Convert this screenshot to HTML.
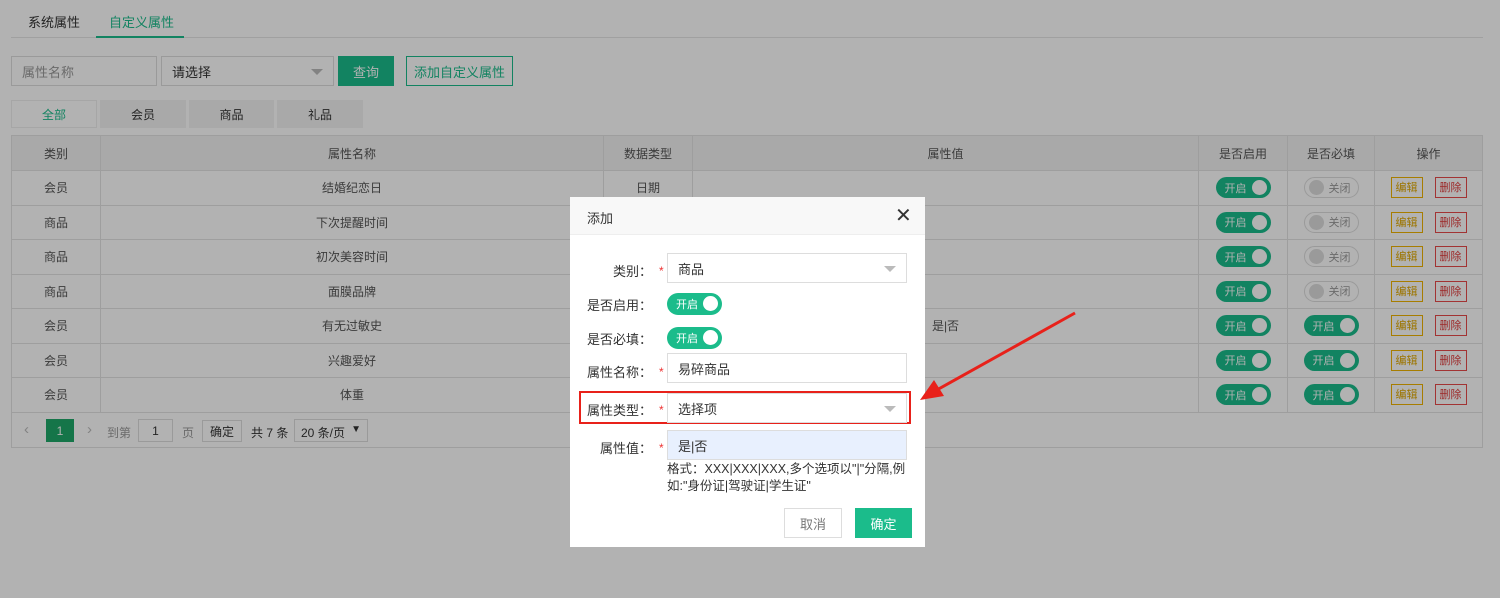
<!DOCTYPE html>
<html><head><meta charset="utf-8"><style>
*{box-sizing:border-box;margin:0;padding:0}
body{width:1500px;height:598px;position:relative;overflow:hidden;background:#fff;font-family:"Liberation Sans","Noto Sans CJK SC",sans-serif;font-size:12px;color:#333}
.a{position:absolute}
.c{display:flex;align-items:center;justify-content:center}
table{border-collapse:collapse;position:absolute;left:11px;top:135px;width:1472px}
td{border:1px solid #e3e3e3;text-align:center;height:34.5px;color:#555}
tr.h td{background:#f2f2f2;height:35px}
.tg{display:inline-flex;align-items:center;width:55px;height:21px;border-radius:11px;background:#1bbc8b;color:#fff;font-size:11px;padding-left:9px;position:relative;vertical-align:middle}
.tg:after{content:"";position:absolute;right:4px;top:3px;width:15px;height:15px;border-radius:50%;background:#fff}
.off{background:#fff;border:1px solid #ddd;color:#999;padding-left:24px}
.off:after{left:4px;right:auto;top:2px;background:#ddd}
.b{display:inline-block;border:1px solid;font-size:11px;width:32px;height:21px;line-height:21px;vertical-align:middle;margin:0 6px}
.e{border-color:#f0b400;color:#e0a800}.d{border-color:#e84a4a;color:#e03a3a}
.inp{border:1px solid #ddd;background:#fff;height:30px;padding-left:10px;display:flex;align-items:center;font-size:13px}
.tri{position:absolute;right:10px;top:12px;border:6px solid transparent;border-top:6px solid #bbb;border-bottom:0}
.lab{position:absolute;width:92px;text-align:right;left:560px;font-size:13px;color:#333}
.st{position:absolute;left:659px;color:#e33;font-size:12px}
</style></head><body>
<div class="a" style="left:28px;top:12px;font-size:13px">系统属性</div>
<div class="a" style="left:109px;top:12px;font-size:13px;color:#1bbc8b">自定义属性</div>
<div class="a" style="left:11px;top:37px;width:1472px;height:1px;background:#e5e5e5"></div>
<div class="a" style="left:96px;top:36px;width:88px;height:2px;background:#1bbc8b"></div>
<div class="a inp" style="left:11px;top:56px;width:146px;color:#999">属性名称</div>
<div class="a inp" style="left:161px;top:56px;width:173px">请选择<span class="tri"></span></div>
<div class="a c" style="left:338px;top:56px;width:56px;height:30px;background:#1bbc8b;color:#fff;font-size:13px">查询</div>
<div class="a c" style="left:406px;top:56px;width:107px;height:30px;border:1px solid #1bbc8b;color:#1bbc8b;font-size:13px">添加自定义属性</div>
<div class="a c" style="left:11px;top:100px;width:86px;height:28px;border:1px solid #eee;color:#1bbc8b;background:#fff">全部</div>
<div class="a c" style="left:100px;top:100px;width:86px;height:28px;background:#f3f3f3">会员</div>
<div class="a c" style="left:189px;top:100px;width:85px;height:28px;background:#f3f3f3">商品</div>
<div class="a c" style="left:277px;top:100px;width:86px;height:28px;background:#f3f3f3">礼品</div>
<table>
<colgroup><col style="width:89px"><col style="width:503px"><col style="width:89px"><col style="width:506px"><col style="width:89px"><col style="width:87px"><col></colgroup>
<tr class="h"><td>类别</td><td>属性名称</td><td>数据类型</td><td>属性值</td><td>是否启用</td><td>是否必填</td><td>操作</td></tr>
<tr><td>会员</td><td>结婚纪恋日</td><td>日期</td><td></td><td><span class="tg">开启</span></td><td><span class="tg off">关闭</span></td><td><span class="b e">编辑</span><span class="b d">删除</span></td></tr>
<tr><td>商品</td><td>下次提醒时间</td><td></td><td></td><td><span class="tg">开启</span></td><td><span class="tg off">关闭</span></td><td><span class="b e">编辑</span><span class="b d">删除</span></td></tr>
<tr><td>商品</td><td>初次美容时间</td><td></td><td></td><td><span class="tg">开启</span></td><td><span class="tg off">关闭</span></td><td><span class="b e">编辑</span><span class="b d">删除</span></td></tr>
<tr><td>商品</td><td>面膜品牌</td><td></td><td></td><td><span class="tg">开启</span></td><td><span class="tg off">关闭</span></td><td><span class="b e">编辑</span><span class="b d">删除</span></td></tr>
<tr><td>会员</td><td>有无过敏史</td><td></td><td>是|否</td><td><span class="tg">开启</span></td><td><span class="tg">开启</span></td><td><span class="b e">编辑</span><span class="b d">删除</span></td></tr>
<tr><td>会员</td><td>兴趣爱好</td><td></td><td></td><td><span class="tg">开启</span></td><td><span class="tg">开启</span></td><td><span class="b e">编辑</span><span class="b d">删除</span></td></tr>
<tr><td>会员</td><td>体重</td><td></td><td></td><td><span class="tg">开启</span></td><td><span class="tg">开启</span></td><td><span class="b e">编辑</span><span class="b d">删除</span></td></tr>
</table>
<div class="a" style="left:11px;top:412px;width:1472px;height:36px;border:1px solid #e3e3e3;border-top:0"></div>
<div class="a" style="left:24px;top:421px;color:#bbb;font-size:15px">‹</div>
<div class="a c" style="left:46px;top:419px;width:28px;height:23px;background:#1fa869;color:#fff">1</div>
<div class="a" style="left:87px;top:421px;color:#bbb;font-size:15px">›</div>
<div class="a" style="left:107px;top:424px;color:#999">到第</div>
<div class="a c" style="left:138px;top:419px;width:35px;height:23px;border:1px solid #ddd;background:#fff">1</div>
<div class="a" style="left:182px;top:424px;color:#999">页</div>
<div class="a c" style="left:202px;top:420px;width:40px;height:22px;border:1px solid #ddd;background:#fff">确定</div>
<div class="a" style="left:251px;top:424px">共 7 条</div>
<div class="a" style="left:294px;top:419px;width:74px;height:23px;border:1px solid #ddd;background:#fff;padding:4px 6px">20 条/页 <span style="float:right;font-size:10px">▼</span></div>
<div class="a" style="left:0;top:0;width:1500px;height:598px;background:rgba(0,0,0,0.3)"></div>
<div class="a" style="left:570px;top:197px;width:355px;height:350px;background:#fff"></div>
<div class="a" style="left:570px;top:197px;width:355px;height:38px;background:#f8f8f8;border-bottom:1px solid #eee"></div>
<div class="a" style="left:587px;top:208px;font-size:13px">添加</div>
<div class="a" style="left:895px;top:203px;font-size:20px;color:#333">✕</div>
<div class="lab" style="top:261px">类别：</div><div class="st" style="top:264px">*</div>
<div class="a inp" style="left:667px;top:253px;width:240px">商品<span class="tri"></span></div>
<div class="lab" style="top:295px">是否启用：</div>
<span class="tg" style="position:absolute;left:667px;top:293px;width:55px;height:22px">开启</span>
<div class="lab" style="top:329px">是否必填：</div>
<span class="tg" style="position:absolute;left:667px;top:327px;width:55px;height:22px">开启</span>
<div class="lab" style="top:362px">属性名称：</div><div class="st" style="top:365px">*</div>
<div class="a inp" style="left:667px;top:353px;width:240px">易碎商品</div>
<div class="a" style="left:579px;top:391px;width:332px;height:33px;border:2px solid #e8211a"></div>
<div class="lab" style="top:400px">属性类型：</div><div class="st" style="top:403px">*</div>
<div class="a inp" style="left:667px;top:393px;width:240px">选择项<span class="tri"></span></div>
<div class="lab" style="top:438px">属性值：</div><div class="st" style="top:441px">*</div>
<div class="a inp" style="left:667px;top:430px;width:240px;background:#e8f0fe">是|否</div>
<div class="a" style="left:667px;top:461px;width:245px;font-size:12.5px;line-height:17px">格式：XXX|XXX|XXX,多个选项以"|"分隔,例如:"身份证|驾驶证|学生证"</div>
<div class="a c" style="left:784px;top:508px;width:58px;height:30px;border:1px solid #ddd;color:#777;font-size:13px">取消</div>
<div class="a c" style="left:855px;top:508px;width:57px;height:30px;background:#1bbc8b;color:#fff;font-size:13px">确定</div>
<svg class="a" style="left:0;top:0" width="1500" height="598"><line x1="1075" y1="313" x2="935" y2="391" stroke="#e8211a" stroke-width="3"/><polygon points="920,400 934,380 944,396" fill="#e8211a"/></svg>
</body></html>
